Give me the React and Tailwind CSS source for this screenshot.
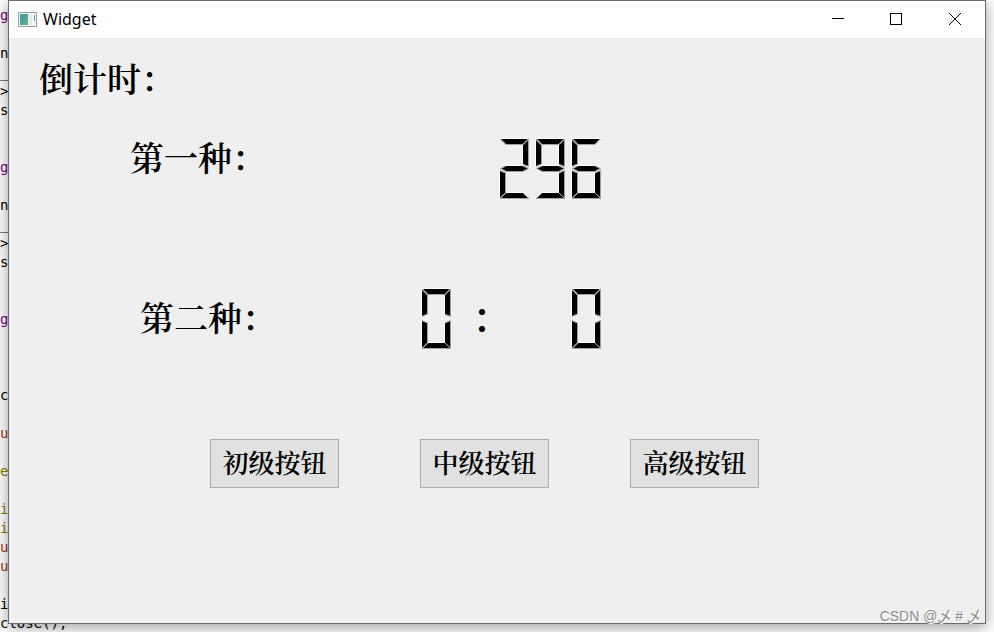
import React from 'react';

// Lines of the editor that stays open behind the window
const codeLines = [
    { text: 'ge', color: 'text-[#800080]' },
    { text: '' },
    { text: 'nu', color: 'text-black' },
    { text: '_u', color: 'text-black' },
    { text: '>:', color: 'text-black' },
    { text: 'se', color: 'text-black' },
    { text: '' },
    { text: '' },
    { text: 'ge', color: 'text-[#800080]' },
    { text: '' },
    { text: 'nu', color: 'text-black' },
    { text: '_u', color: 'text-black' },
    { text: '>:', color: 'text-black' },
    { text: 'se', color: 'text-black' },
    { text: '' },
    { text: '' },
    { text: 'ge', color: 'text-[#800080]' },
    { text: '' },
    { text: '' },
    { text: '' },
    { text: 'cl', color: 'text-black' },
    { text: '' },
    { text: 'ut', color: 'text-[#a03010]' },
    { text: '' },
    { text: 'e', color: 'text-[#808000]' },
    { text: '' },
    { text: 'in', color: 'text-[#808000]' },
    { text: 'in', color: 'text-[#808000]' },
    { text: 'ut', color: 'text-[#a03010]' },
    { text: 'ut', color: 'text-[#a03010]' },
    { text: '' },
    { text: 'in', color: 'text-black' },
    { text: 'close();', color: 'text-black' },
];

// Each segment: filled shape, lit edge (top/left) and shaded edge (bottom/right)
const SEGMENTS = {
    top: { fill: '1,0 28,0 23,5 6,5', light: '-1,-0.5 28,-0.5', dark: '0,0 5.5,5.5 23,5.5 28.5,0' },
    topLeft: { fill: '0,1 5,6 5,25 0,27', light: '-0.5,28 -0.5,0', dark: '0,0.5 5.5,6 5.5,25 0,27.5' },
    topRight: { fill: '28,1 28,27 23,25 23,6', light: '23,25 22.5,25 22.5,6', dark: '23,5.5 28.5,0 28.5,27.5 23,25.5' },
    middle: { fill: '1,29.5 6,27 23,27 28,29.5 23,32 6,32', light: '6,26.5 23,26.5', dark: '6,27 0.5,29.5 6,32.5 23,32.5 28.5,29.5 23,27' },
    bottomLeft: { fill: '0,32 5,34 5,54 0,59', light: '-0.5,59 -0.5,31', dark: '0,31.5 5.5,34 5.5,54 0,59.5' },
    bottomRight: { fill: '28,32 28,59 23,54 23,34', light: '22.5,54 22.5,34', dark: '23,34 28.5,31.5 28.5,59.5 23,54' },
    bottom: { fill: '1,59 6,54 23,54 28,59', light: '6,53.5 23,53.5', dark: '6,54 0,59.5 29,59.5 23,54' },
};

const DIGITS = {
    0: ['top', 'topLeft', 'topRight', 'bottomLeft', 'bottomRight', 'bottom'],
    2: ['top', 'topRight', 'middle', 'bottomLeft', 'bottom'],
    6: ['top', 'topLeft', 'middle', 'bottomLeft', 'bottomRight', 'bottom'],
    9: ['top', 'topLeft', 'topRight', 'middle', 'bottomRight', 'bottom'],
};

const LcdNumber = ({ value }) => (
    <div role="img" aria-label={value} className="flex gap-1">
        {value.split('').map((digit, index) => (
            <svg key={index} width="32" height="63" viewBox="-1 -1 32 63">
                {DIGITS[digit].map((name) => (
                    <polyline key={name} points={SEGMENTS[name].light} fill="none" stroke="#fff" />
                ))}
                {DIGITS[digit].map((name) => (
                    <polygon key={name} points={SEGMENTS[name].fill} fill="#000" />
                ))}
                {DIGITS[digit].map((name) => (
                    <polyline key={name} points={SEGMENTS[name].dark} fill="none" stroke="#a0a0a0" />
                ))}
            </svg>
        ))}
    </div>
);

const TitleBar = () => (
    <header className="flex h-[37px] items-center bg-white pl-2">
        <svg width="20" height="16" viewBox="0 0 20 16">
            <defs>
                <linearGradient id="pane" x1="0" y1="0" x2="1" y2="1">
                    <stop offset="0" stopColor="#4a8fb0" />
                    <stop offset="1" stopColor="#5cb87c" />
                </linearGradient>
            </defs>
            <rect x="1.5" y="0.5" width="18" height="14" fill="#f4f6f7" stroke="#98a0a6" />
            <rect x="3" y="2" width="8" height="11" fill="url(#pane)" />
            <rect x="12" y="2" width="3" height="11" fill="#e6e9ea" />
            <rect x="17" y="3" width="1" height="6" fill="#5aa9a0" />
        </svg>
        <h1 className="flex-1 pb-0.5 pl-1.5 font-['Noto_Sans',sans-serif] text-[16px] leading-5">Widget</h1>
        <button aria-label="Minimize" className="flex h-full w-[58px] items-center justify-center pb-0.5">
            <svg width="12" height="12" viewBox="0 0 12 12" shapeRendering="crispEdges">
                <path d="M0 5.5H12" stroke="#000" />
            </svg>
        </button>
        <button aria-label="Maximize" className="flex h-full w-[58px] items-center justify-center pb-0.5">
            <svg width="12" height="12" viewBox="0 0 12 12" shapeRendering="crispEdges">
                <rect x="0.5" y="0.5" width="11" height="11" fill="none" stroke="#000" />
            </svg>
        </button>
        <button aria-label="Close" className="flex h-full w-[60px] items-center justify-center pb-0.5">
            <svg width="12" height="12" viewBox="0 0 12 12">
                <path d="M0 0L12 12M12 0L0 12" stroke="#000" />
            </svg>
        </button>
    </header>
);

const LevelButton = ({ children }) => (
    <button className="h-[49px] w-[129px] border border-[#adadad] bg-[#e1e1e1] pb-1 text-[26px] leading-none">
        {children}
    </button>
);

const App = () => {
    return (
        <div className="grid min-h-screen overflow-hidden bg-white text-black">
            {/* Editor behind */}
            <pre className="col-start-1 row-start-1 h-0 min-h-full overflow-hidden pt-1.5 font-['DejaVu_Sans_Mono',monospace] text-[14px] leading-[19px]">
                {codeLines.map((line, index) => (
                    <div key={index} className={`h-[19px] ${line.color || ''}`}>{line.text}</div>
                ))}
            </pre>

            {/* Window */}
            <div className="z-10 col-start-1 row-start-1 mr-2 mb-2 ml-2 flex flex-col border border-[#6b6b6b] bg-[#efefef] shadow-[0_3px_14px_rgba(0,0,0,0.4)]">
                <TitleBar />
                <main className="flex flex-1 flex-col font-['Noto_Serif_CJK_SC','Noto_Sans_CJK_SC',serif] font-semibold">
                    <h2 className="pt-4 pl-[30px] text-[34px] leading-[48px]">倒计时：</h2>

                    <div className="mt-9 flex h-[63px] pl-[121px]">
                        <h3 className="w-[369px] text-[34px] leading-[38px]">第一种：</h3>
                        <LcdNumber value="296" />
                    </div>

                    <div className="mt-[87px] flex h-[63px] pl-[131px]">
                        <h3 className="w-[281px] pt-[10px] text-[34px] leading-[38px]">第二种：</h3>
                        <LcdNumber value="0" />
                        <span className="w-[118px] pl-[22px] text-[42px] leading-[50px]">:</span>
                        <LcdNumber value="0" />
                    </div>

                    <div className="mt-[88px] flex gap-[81px] pl-[201px]">
                        <LevelButton>初级按钮</LevelButton>
                        <LevelButton>中级按钮</LevelButton>
                        <LevelButton>高级按钮</LevelButton>
                    </div>

                    <footer className="mt-auto self-end pr-1 font-['Liberation_Sans','Noto_Sans_CJK_SC',sans-serif] text-[14px] leading-[14px] font-normal text-[#8c8c8c] [text-shadow:1px_1px_0_#fff]">
                        CSDN @乄 # 乄
                    </footer>
                </main>
            </div>
        </div>
    );
};

export default App;
